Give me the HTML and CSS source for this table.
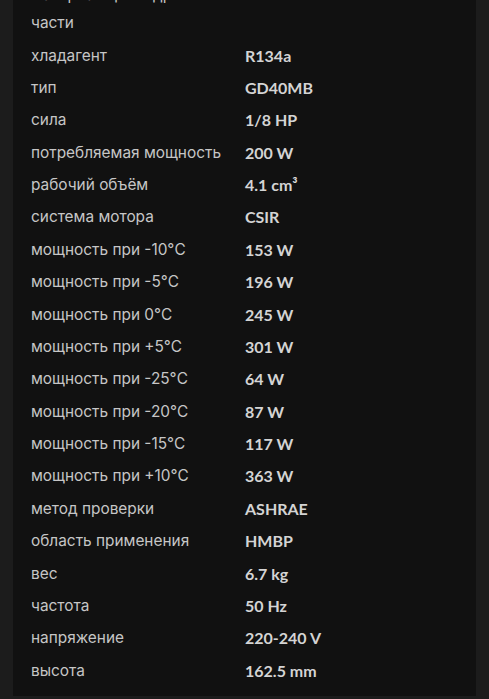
FILE: index.html
```html
<!DOCTYPE html>
<html lang="ru">
<head>
<meta charset="utf-8">
<link rel="stylesheet" href="styles.css">
</head>
<body>
<div class="page">
  <div class="panel">
    <div class="specs">
      <div class="label">материал цилиндрической части</div><div class="value"></div>
      <div class="label">хладагент</div><div class="value">R134a</div>
      <div class="label">тип</div><div class="value">GD40MB</div>
      <div class="label">сила</div><div class="value">1/8 HP</div>
      <div class="label">потребляемая мощность</div><div class="value">200 W</div>
      <div class="label">рабочий объём</div><div class="value">4.1 cm³</div>
      <div class="label">система мотора</div><div class="value">CSIR</div>
      <div class="label">мощность при -10°C</div><div class="value">153 W</div>
      <div class="label">мощность при -5°C</div><div class="value">196 W</div>
      <div class="label">мощность при 0°C</div><div class="value">245 W</div>
      <div class="label">мощность при +5°C</div><div class="value">301 W</div>
      <div class="label">мощность при -25°C</div><div class="value">64 W</div>
      <div class="label">мощность при -20°C</div><div class="value">87 W</div>
      <div class="label">мощность при -15°C</div><div class="value">117 W</div>
      <div class="label">мощность при +10°C</div><div class="value">363 W</div>
      <div class="label">метод проверки</div><div class="value">ASHRAE</div>
      <div class="label">область применения</div><div class="value">HMBP</div>
      <div class="label">вес</div><div class="value">6.7 kg</div>
      <div class="label">частота</div><div class="value">50 Hz</div>
      <div class="label">напряжение</div><div class="value">220-240 V</div>
      <div class="label">высота</div><div class="value">162.5 mm</div>
    </div>
  </div>
</div>
</body>
</html>
```

FILE: styles.css
```css
html, body {
  margin: 0;
  background: #1c1c1c;
}
.page {
  padding: 0 13px 3px 13px;
  overflow: hidden;
  height: 699px;
  box-sizing: border-box;
}
.panel {
  background: #111111;
  margin-top: -29px;
  padding: 8px 18px 9px 18px;
}
.specs {
  display: grid;
  grid-template-columns: 214px 1fr;
}
.label, .value {
  padding: 2.2px 0;
  line-height: 28px;
}
.label {
  font-family: Inter, "Noto Sans", sans-serif;
  font-size: 15.4px;
  color: #c6c6c6;
}
.value {
  font-family: Lato, "Liberation Sans", sans-serif;
  font-weight: 700;
  font-size: 16px;
  color: #d4d4d4;
}
```
